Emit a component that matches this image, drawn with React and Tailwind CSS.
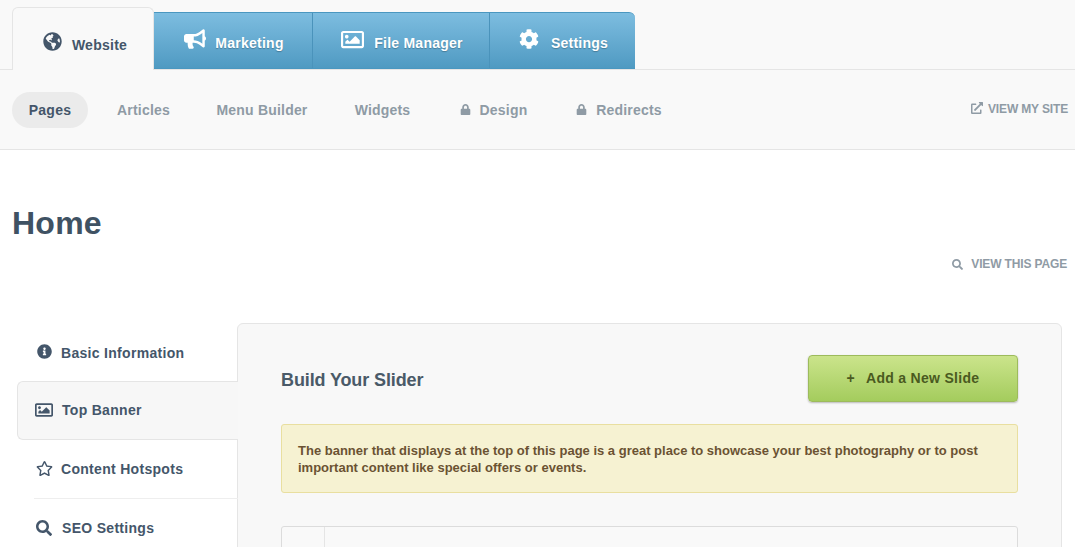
import React from 'react';
import { FaGlobeAmericas, FaBullhorn, FaRegImage, FaCog, FaLock, FaExternalLinkAlt, FaSearch, FaInfoCircle, FaRegStar } from 'react-icons/fa';

const blueTabs = [
  { label: 'Marketing', icon: FaBullhorn, width: 'w-[159px]', size: 'text-[22px]', gap: 'gap-[9px]' },
  { label: 'File Manager', icon: FaRegImage, width: 'w-[177px]', size: 'text-[23px]', gap: 'gap-[10px]' },
  { label: 'Settings', icon: FaCog, width: 'w-[145px]', size: 'text-[20px]', gap: 'gap-[12px]' },
];

const subNav = [
  { label: 'Articles', width: 'w-[111px]' },
  { label: 'Menu Builder', width: 'w-[126px]' },
  { label: 'Widgets', width: 'w-[115px]' },
  { label: 'Design', locked: true, width: 'w-[107px]' },
  { label: 'Redirects', locked: true, width: 'w-[144px]' },
];

export default function App() {
  return (
    <div className="h-[547px] overflow-hidden bg-white font-['Liberation_Sans',Arial,sans-serif] text-[#44566a]">
      {/* top tabs */}
      <div className="flex h-[70px] items-end border-b border-[#e5e5e5] bg-[#f9f9f9] pl-3">
        <div className="-mb-px flex h-[63px] w-[142px] items-center justify-center gap-[10px] rounded-t-[6px] border border-b-0 border-[#e5e5e5] bg-[#f9f9f9] pl-[4px] pt-[2px]">
          <FaGlobeAmericas className="mt-[3px] text-[19px] text-[#44566a]" />
          <span className="pt-[10px] text-[14px] font-bold tracking-[0.25px]">Website</span>
        </div>
        <div className="flex h-[57px] overflow-hidden rounded-tr-[6px] border-y border-[#4a97c0] bg-gradient-to-b from-[#7dbde0] to-[#4f9ac2]">
          {blueTabs.map(({ label, icon: Icon, width, size, gap }, idx) => (
            <div
              key={label}
              className={`flex items-center justify-center pl-[2px] ${width} ${gap} ${idx < 2 ? 'border-r border-[#4a93bb]' : ''}`}
            >
              <Icon className={`${size} mb-[3px] text-white`} />
              <span className="pt-[6px] text-[14px] font-bold tracking-[0.25px] text-white [text-shadow:0_1px_1px_rgba(0,0,0,0.25)]">{label}</span>
            </div>
          ))}
        </div>
      </div>

      {/* sub nav */}
      <div className="flex h-[80px] items-center border-b border-[#e5e5e5] bg-[#f9f9f9] pl-3 pr-[7px]">
        <div className="flex h-9 w-[76px] items-center justify-center rounded-full bg-[#ebebeb] pt-[2px] text-[14px] font-bold tracking-[0.3px]">Pages</div>
        {subNav.map(({ label, locked, width }) => (
          <div key={label} className={`flex items-center justify-center gap-[9px] pt-[2px] text-[14px] font-bold tracking-[0.2px] text-[#8f9ba5] ${width}`}>
            {locked && <FaLock className="mb-[2px] text-[11px]" />}
            <span>{label}</span>
          </div>
        ))}
        <div className="ml-auto flex items-center gap-[5px] pb-[1px] text-[12px] font-bold tracking-[-0.15px] text-[#8f9ba5]">
          <FaExternalLinkAlt className="mb-[2px] text-[12px]" />
          <span>VIEW MY SITE</span>
        </div>
      </div>

      {/* heading */}
      <div className="pl-3 pr-2 pt-[55px]">
        <h1 className="text-[32px] leading-[36px] font-bold tracking-[0.25px] text-[#3f5263]">Home</h1>
        <div className="mt-[16px] flex items-center justify-end gap-[8px] text-[12px] leading-[14px] font-bold tracking-[-0.15px] text-[#8f9ba5]">
          <FaSearch className="text-[11px]" />
          <span>VIEW THIS PAGE</span>
        </div>
      </div>

      {/* body */}
      <div className="mt-[52px] flex pl-[17px] pr-[13px]">
        <div className="relative z-10 w-[221px] shrink-0 -mr-px pt-px text-[14px] font-bold tracking-[0.3px]">
          <div className="flex h-[57px] items-center gap-[9px] pl-[20px]">
            <FaInfoCircle className="mb-[3px] text-[15px]" />
            <span className="pt-[2px]">Basic Information</span>
          </div>
          <div className="flex h-[59px] items-center gap-[9px] rounded-l-[6px] border border-r-0 border-[#e5e5e5] bg-[#f7f7f7] pl-[17px]">
            <FaRegImage className="mb-[1px] text-[18px]" />
            <span>Top Banner</span>
          </div>
          <div className="ml-[17px] flex h-[59px] items-center gap-[8px] border-b border-[#eeeeee] pl-[2px]">
            <FaRegStar className="mb-[1px] text-[17px]" />
            <span>Content Hotspots</span>
          </div>
          <div className="flex h-[58px] items-center gap-[10px] pl-[19px]">
            <FaSearch className="mb-[1px] text-[16px]" />
            <span>SEO Settings</span>
          </div>
        </div>

        <div className="h-[300px] flex-1 rounded-[6px] border border-[#e5e5e5] bg-[#f8f8f8] pl-[43px] pr-[43px] pt-[31px]">
          <div className="flex items-center justify-between">
            <h2 className="pt-[4px] text-[18px] font-bold tracking-[-0.12px] text-[#4a5a68]">Build Your Slider</h2>
            <div className="flex h-[47px] w-[210px] items-center justify-center gap-[11px] rounded-[4px] border border-[#9dbb5c] bg-gradient-to-b from-[#cbe48b] to-[#a4cc5d] text-[14px] font-bold tracking-[0.3px] text-[#4a5a1f] shadow-[0_1px_2px_rgba(0,0,0,0.25)]">
              <span>+</span>
              <span>Add a New Slide</span>
            </div>
          </div>
          <div className="mt-[22px] h-[69px] rounded-[3px] border border-[#e9dfa0] bg-[#f6f2d2] px-4 pt-[17px] text-[13px] leading-[17px] font-bold text-[#6b5232]">
            The banner that displays at the top of this page is a great place to showcase your best photography or to post important content like special offers or events.
          </div>
          <div className="mt-[33px] flex h-[60px] rounded-[3px] border border-[#dcdcdc] bg-[#f9f9f9]">
            <div className="w-[43px] border-r border-[#e5e5e5]"></div>
          </div>
        </div>
      </div>
    </div>
  );
}
